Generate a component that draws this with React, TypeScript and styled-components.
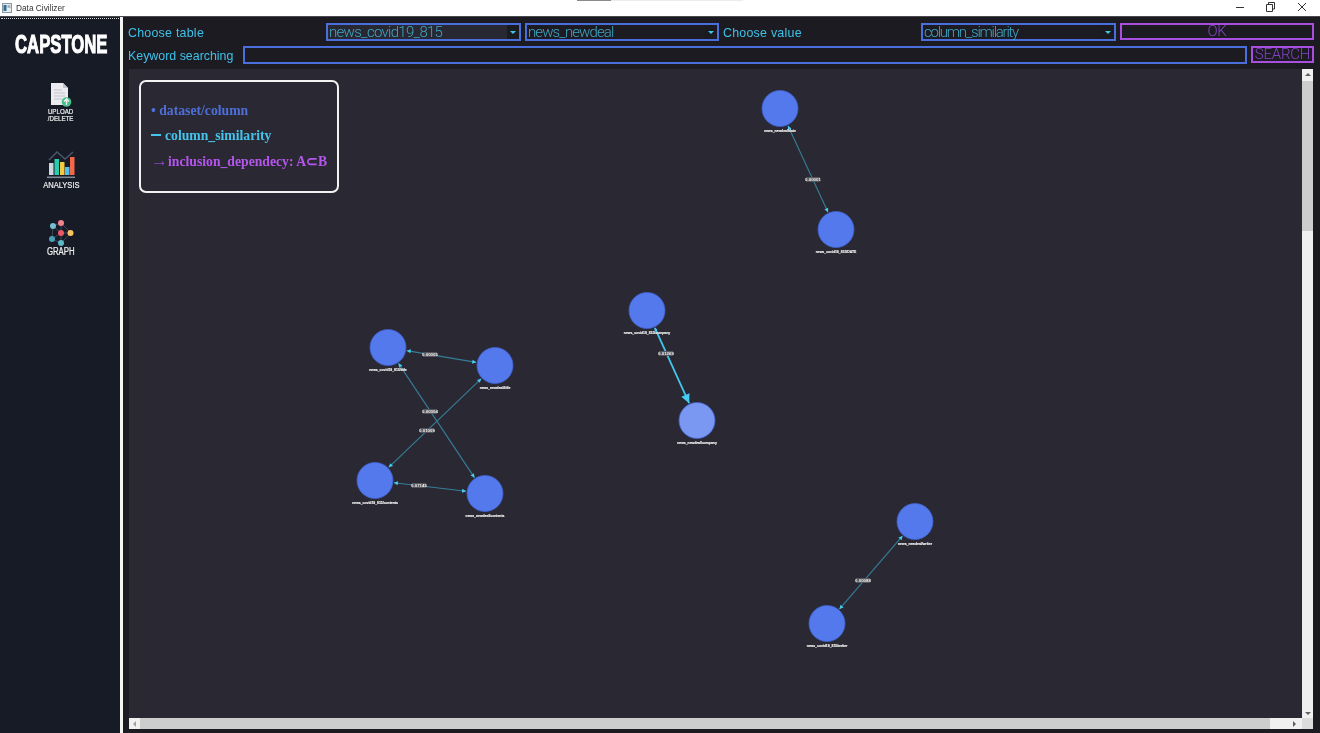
import React from "react";
import styled, { createGlobalStyle } from "styled-components";

const GlobalStyle = createGlobalStyle`
  html, body {
    margin: 0;
    padding: 0;
    background: #ffffff;
  }
  * {
    box-sizing: border-box;
  }
`;

const Window = styled.div`
  position: relative;
  width: 1320px;
  height: 733px;
  display: flex;
  flex-direction: column;
  overflow: hidden;
  filter: blur(0.3px);
`;

const TitleBar = styled.div`
  height: 16px;
  flex: none;
  display: flex;
  align-items: center;
  background: #ffffff;
  padding-left: 2px;
`;

const TitleText = styled.span`
  margin-left: 4px;
  font: 8.3px "Liberation Sans", sans-serif;
  color: #333;
`;

const TitleScroll = styled.div`
  position: absolute;
  top: 0;
  left: 577px;
  width: 166px;
  height: 1px;
  background: linear-gradient(to right, #8a8a8a 34px, #ececec 34px);
`;

const WindowControls = styled.div`
  margin-left: auto;
  display: flex;
  padding-right: 8px;
  gap: 11px;
  margin-top: -3px;
`;

const Body = styled.div`
  flex: 1;
  display: flex;
  min-height: 0;
  border-top: 1px solid #4a4a4e;
`;

const Sidebar = styled.aside`
  width: 120px;
  flex: none;
  background: #171b26;
  display: flex;
  flex-direction: column;
  align-items: center;
  padding-left: 2px;
`;

const Dots = styled.div`
  width: 118px;
  margin-left: -2px;
  margin-top: 1px;
  border-top: 1px dotted #d8d8d8;
`;

const BrandSvg = styled.svg`
  display: block;
  margin-top: 15px;
  overflow: visible;
`;

const NavItem = styled.div<{ $top: number }>`
  margin-top: ${(p) => p.$top}px;
  display: flex;
  flex-direction: column;
  align-items: center;
`;

const NavLabel = styled.div<{ $size: number; $gap: number; $squeeze: number }>`
  font: 400 ${(p) => p.$size}px/${(p) => Math.max(7, p.$size)}px "Liberation Sans", sans-serif;
  color: #f0f0f0;
  text-align: center;
  margin-top: ${(p) => p.$gap}px;
  transform: scaleX(${(p) => p.$squeeze});
  -webkit-text-stroke: 0.2px #f0f0f0;
  white-space: nowrap;
`;

const Divider = styled.div`
  width: 2.5px;
  flex: none;
  background: #f4f4f4;
`;

const Main = styled.main`
  flex: 1;
  min-width: 0;
  background: #1c1b22;
  display: flex;
  flex-direction: column;
  padding: 6px 6px 4px 5.5px;
`;

const Row = styled.div`
  display: flex;
  height: 18px;
  margin-bottom: 5px;
  flex: none;
  align-items: stretch;
`;

const Label = styled.div<{ $width: number; $tight?: boolean }>`
  width: ${(p) => p.$width}px;
  flex: none;
  font: 12.4px/21px "Liberation Sans", sans-serif;
  height: 18px;
  letter-spacing: ${(p) => (p.$tight ? "0" : "0.25px")};
  color: #3fc1e8;
  white-space: nowrap;
`;

const SelectBox = styled.div<{ $width: number; $tint?: boolean }>`
  width: ${(p) => p.$width}px;
  flex: none;
  margin-right: 4px;
  border: 2px solid #4a6fdc;
  background: ${(p) => (p.$tint ? "#282833" : "#1c1b22")};
  display: flex;
  align-items: stretch;
  min-width: 0;
`;

const SelectValue = styled.div<{ $spacing: number }>`
  flex: 1;
  padding-left: 1px;
  font: 300 15px/14px Roboto, sans-serif;
  letter-spacing: ${(p) => p.$spacing}px;
  color: #3fa6c6;
  white-space: nowrap;
`;

const SelectArrow = styled.div`
  width: 12px;
  flex: none;
  background: #1a1a21;
  display: flex;
  align-items: center;
  justify-content: center;

  &::after {
    content: "";
    border-left: 3px solid transparent;
    border-right: 3px solid transparent;
    border-top: 3px solid #45c4ea;
  }
`;

const PurpleButton = styled.button<{ $width: number }>`
  width: ${(p) => p.$width}px;
  flex: none;
  height: 17px;
  padding: 0;
  background: #1c1b22;
  border: 2px solid #a94fe0;
  color: #8244c4;
  font: 300 15px/13px Roboto, sans-serif;
  letter-spacing: -0.2px;
`;

const SearchInput = styled.input`
  flex: 1;
  min-width: 0;
  margin-right: 4px;
  background: #1c1b22;
  border: 2px solid #4a6fdc;
  outline: none;
`;

const CanvasFrame = styled.div`
  flex: 1;
  min-height: 0;
  margin: 0 1px 0 1px;
  display: grid;
  grid-template-columns: 1fr 11px;
  grid-template-rows: 1fr 11px;
`;

const Canvas = styled.div`
  position: relative;
  background: #2a2933;
  min-width: 0;
  min-height: 0;
`;

const GraphSvg = styled.svg`
  display: block;
  width: 100%;
  height: 100%;
`;

const Legend = styled.div`
  position: absolute;
  left: 10px;
  top: 11px;
  width: 200px;
  height: 113px;
  border: 2px solid #f2f2f2;
  border-radius: 7px;
  padding: 19.5px 10px 0 10px;
  display: flex;
  flex-direction: column;
  gap: 7.6px;
`;

const LegendLine = styled.div<{ $color: string }>`
  font: bold 13.7px/18px "Liberation Serif", serif;
  color: ${(p) => p.$color};
  white-space: nowrap;
`;

const DashGlyph = styled.span`
  display: inline-block;
  width: 10px;
  height: 2px;
  margin: 0 4px 4px 0;
  background: #45c4ec;
`;

const ArrowGlyph = styled.span`
  display: inline-block;
  width: 17px;
  color: #8a45c4;
  font-size: 17px;
  font-weight: 400;
  line-height: 14px;
`;

const VScroll = styled.div`
  background: #f0f0f0;
  display: flex;
  flex-direction: column;
  align-items: center;
  padding-top: 4px;
`;

const VThumb = styled.div`
  width: 100%;
  height: 150px;
  margin-top: 5px;
  background: #cdcdcd;
`;

const HScroll = styled.div`
  background: #f0f0f0;
  display: flex;
  align-items: center;
  padding-left: 4px;
  padding-right: 4px;
`;

const HThumb = styled.div`
  height: 100%;
  width: 1130px;
  margin-left: 4px;
  background: #cdcdcd;
`;

const ScrollArrow = styled.div<{ $dir: "up" | "down" | "left" | "right" }>`
  width: 0;
  height: 0;
  border: 3px solid transparent;
  ${(p) =>
    p.$dir === "up"
      ? "border-bottom-color: #606060; border-top-width: 0;"
      : p.$dir === "down"
        ? "border-top-color: #606060; border-bottom-width: 0; margin-top: auto; margin-bottom: 3px;"
        : p.$dir === "left"
          ? "border-right-color: #a0a0a0; border-left-width: 0;"
          : "border-left-color: #606060; border-right-width: 0; margin-left: auto; margin-right: 2px;"}
`;

const Corner = styled.div`
  background: #dcdcdc;
`;

type GraphNode = { x: number; y: number; name: string; active?: boolean };

const nodes: GraphNode[] = [
  { x: 780, y: 108, name: "news_newdeal/date" },
  { x: 836, y: 229, name: "news_covid19_815/DATE" },
  { x: 647, y: 310, name: "news_covid19_815/company" },
  { x: 697, y: 420, name: "news_newdeal/company", active: true },
  { x: 388, y: 347, name: "news_covid19_815/title" },
  { x: 495, y: 365, name: "news_newdeal/title" },
  { x: 375, y: 480, name: "news_covid19_815/contents" },
  { x: 485, y: 493, name: "news_newdeal/contents" },
  { x: 915, y: 521, name: "news_newdeal/writer" },
  { x: 827, y: 623, name: "news_covid19_815/writer" },
];

const edges = [
  { a: 0, b: 1, value: "0.00001", lx: 813, ly: 179 },
  { a: 2, b: 3, value: "0.01269", lx: 666, ly: 353, active: true },
  { a: 4, b: 5, value: "0.00005", lx: 430, ly: 354 },
  { a: 4, b: 7, value: "0.00004", lx: 430, ly: 411 },
  { a: 5, b: 6, value: "0.01009", lx: 427, ly: 430 },
  { a: 6, b: 7, value: "0.07145", lx: 419, ly: 485 },
  { a: 8, b: 9, value: "0.00088", lx: 863, ly: 580 },
];

function Arrow({ x, y, angle, size }: { x: number; y: number; angle: number; size: number }) {
  return (
    <polygon
      points={`0,0 ${-size},${-size * 0.5} ${-size},${size * 0.5}`}
      fill="#45cdf2"
      transform={`translate(${x} ${y}) rotate(${angle})`}
    />
  );
}

function Graph() {
  return (
    <GraphSvg viewBox="129 69 1173 648">
      {edges.map((e) => {
        const from = nodes[e.a];
        const to = nodes[e.b];
        const dx = to.x - from.x;
        const dy = to.y - from.y;
        const len = Math.hypot(dx, dy);
        const ux = dx / len;
        const uy = dy / len;
        const r = 19;
        const x1 = from.x + ux * r;
        const y1 = from.y + uy * r;
        const x2 = to.x - ux * r;
        const y2 = to.y - uy * r;
        const angle = (Math.atan2(dy, dx) * 180) / Math.PI;
        return (
          <g key={e.value}>
            <line
              x1={x1}
              y1={y1}
              x2={x2}
              y2={y2}
              stroke={e.active ? "#42c6ec" : "#347f98"}
              strokeWidth={e.active ? 1.8 : 1.1}
            />
            <Arrow x={x2} y={y2} angle={angle} size={e.active ? 9 : 4} />
            <Arrow x={x1} y={y1} angle={angle + 180} size={e.active ? 3 : 4} />
            <rect x={e.lx - 7} y={e.ly - 2.5} width={14} height={5} fill="#55555d" />
            <text
              x={e.lx}
              y={e.ly + 1.6}
              textAnchor="middle"
              fontFamily="'Liberation Sans', sans-serif"
              fontWeight="bold"
              fontSize="4.4"
              fill="#f0f0f0"
            >
              {e.value}
            </text>
          </g>
        );
      })}
      {nodes.map((n) => (
        <g key={n.name}>
          <circle
            cx={n.x}
            cy={n.y}
            r={18}
            fill={n.active ? "#7a97f1" : "#5479ec"}
            stroke="#3f60cc"
            strokeWidth={0.8}
          />
          <text
            x={n.x}
            y={n.y + 23}
            textAnchor="middle"
            fontFamily="'Liberation Sans', sans-serif"
            fontWeight="bold"
            fontSize="3.4"
            fill="#f2f2f2"
            stroke="#f2f2f2"
            strokeWidth="0.15"
          >
            {n.name}
          </text>
        </g>
      ))}
    </GraphSvg>
  );
}

function AppIcon() {
  return (
    <svg width="10" height="10" viewBox="0 0 10 10">
      <rect x="0.5" y="0.5" width="9" height="9" fill="#e6ecf2" stroke="#8b97a3" />
      <rect x="1.5" y="2" width="3" height="6" fill="#2f6f8a" />
      <rect x="5.5" y="2" width="3" height="3" fill="#a9b6c2" />
    </svg>
  );
}

function WindowButtons() {
  return (
    <WindowControls>
      <svg width="20" height="10" viewBox="0 0 20 10">
        <path d="M6 5.5H14" stroke="#333" fill="none" />
      </svg>
      <svg width="20" height="10" viewBox="0 0 20 10">
        <path d="M7.5 2.5V.5H13.5V7H11.5M5.5 2.5H11.5V9.5H5.5Z" stroke="#333" fill="none" />
      </svg>
      <svg width="20" height="10" viewBox="0 0 20 10">
        <path d="M6 1L14 9M14 1L6 9" stroke="#333" fill="none" />
      </svg>
    </WindowControls>
  );
}

function BrandLogo() {
  return (
    <BrandSvg width="94" height="20" viewBox="0 0 94 20">
      <text
        transform="translate(1 19) scale(0.88 1.33)"
        fontFamily="'Liberation Sans', sans-serif"
        fontWeight="bold"
        fontSize="19"
        fill="#ffffff"
        stroke="#ffffff"
        strokeWidth="0.8"
      >
        CAPSTONE
      </text>
    </BrandSvg>
  );
}

function UploadIcon() {
  return (
    <svg width="22" height="25" viewBox="0 0 22 25">
      <path d="M1 0H13L18 5V22H1Z" fill="#ecebf0" />
      <path d="M13 0L18 5H13Z" fill="#c4c4cc" />
      <path d="M4 7H12M4 10H15M4 13H15M4 16H12" stroke="#c3c3cb" strokeWidth="1" />
      <circle cx="16.5" cy="19" r="4.8" fill="#45c08a" />
      <path d="M16.5 22V16.5M14 18.5L16.5 16L19 18.5" stroke="#f4f4f4" strokeWidth="1.4" fill="none" />
    </svg>
  );
}

function AnalysisIcon() {
  return (
    <svg width="28" height="29" viewBox="0 0 28 29">
      <path d="M2 10L10 2L18 9L26 2" stroke="#46586a" strokeWidth="1.4" fill="none" />
      <rect x="2" y="13" width="4.5" height="12" fill="#cfd4de" />
      <rect x="7.5" y="9" width="4.5" height="16" fill="#2bcbb0" />
      <rect x="13" y="12" width="4.5" height="13" fill="#f5c842" />
      <rect x="18" y="17" width="4.5" height="8" fill="#4dc3ec" />
      <rect x="23" y="7" width="4.5" height="18" fill="#f4674a" />
      <rect x="0" y="26.5" width="28" height="1.6" fill="#7d8896" />
    </svg>
  );
}

function GraphIcon() {
  return (
    <svg width="28" height="26" viewBox="0 0 28 26">
      <path
        d="M6 6L14 3L24 13L14 23L5 19ZM6 6L14 13L5 19M14 3V23M14 13H24"
        stroke="#3e4658"
        strokeWidth="1"
        fill="none"
      />
      <circle cx="6" cy="6" r="3" fill="#74c0d2" />
      <circle cx="14" cy="3" r="3" fill="#f0838e" />
      <circle cx="14" cy="13" r="3" fill="#ee5567" />
      <circle cx="23.5" cy="13" r="3" fill="#fbc45e" />
      <circle cx="5" cy="19" r="3" fill="#4a9fb8" />
      <circle cx="14" cy="23" r="3" fill="#5cb8c6" />
    </svg>
  );
}

export default function App() {
  return (
    <Window>
      <GlobalStyle />
      <TitleScroll />
      <TitleBar>
        <AppIcon />
        <TitleText>Data Civilizer</TitleText>
        <WindowButtons />
      </TitleBar>
      <Body>
        <Sidebar>
          <Dots />
          <BrandLogo />
          <NavItem $top={29}>
            <UploadIcon />
            <NavLabel $size={7} $gap={0} $squeeze={0.88}>
              UPLOAD
              <br />
              /DELETE
            </NavLabel>
          </NavItem>
          <NavItem $top={28}>
            <AnalysisIcon />
            <NavLabel $size={9.7} $gap={1} $squeeze={0.78}>
              ANALYSIS
            </NavLabel>
          </NavItem>
          <NavItem $top={30}>
            <GraphIcon />
            <NavLabel $size={10} $gap={1} $squeeze={0.78}>
              GRAPH
            </NavLabel>
          </NavItem>
        </Sidebar>
        <Divider />
        <Main>
          <Row>
            <Label $width={198}>Choose table</Label>
            <SelectBox $width={195} $tint>
              <SelectValue $spacing={-0.7}>news_covid19_815</SelectValue>
              <SelectArrow />
            </SelectBox>
            <SelectBox $width={194}>
              <SelectValue $spacing={-0.9}>news_newdeal</SelectValue>
              <SelectArrow />
            </SelectBox>
            <Label $width={198}>Choose value</Label>
            <SelectBox $width={195}>
              <SelectValue $spacing={-1.25}>column_similarity</SelectValue>
              <SelectArrow />
            </SelectBox>
            <PurpleButton $width={194}>OK</PurpleButton>
          </Row>
          <Row>
            <Label $width={115} $tight>
              Keyword searching
            </Label>
            <SearchInput />
            <PurpleButton $width={63}>SEARCH</PurpleButton>
          </Row>
          <CanvasFrame>
            <Canvas>
              <Graph />
              <Legend>
                <LegendLine $color="#4f6fd8">• dataset/column</LegendLine>
                <LegendLine $color="#45c4ec">
                  <DashGlyph />
                  column_similarity
                </LegendLine>
                <LegendLine $color="#b455ec">
                  <ArrowGlyph>→</ArrowGlyph>inclusion_dependecy: A⊂B
                </LegendLine>
              </Legend>
            </Canvas>
            <VScroll>
              <ScrollArrow $dir="up" />
              <VThumb />
              <ScrollArrow $dir="down" />
            </VScroll>
            <HScroll>
              <ScrollArrow $dir="left" />
              <HThumb />
              <ScrollArrow $dir="right" />
            </HScroll>
            <Corner />
          </CanvasFrame>
        </Main>
      </Body>
    </Window>
  );
}
